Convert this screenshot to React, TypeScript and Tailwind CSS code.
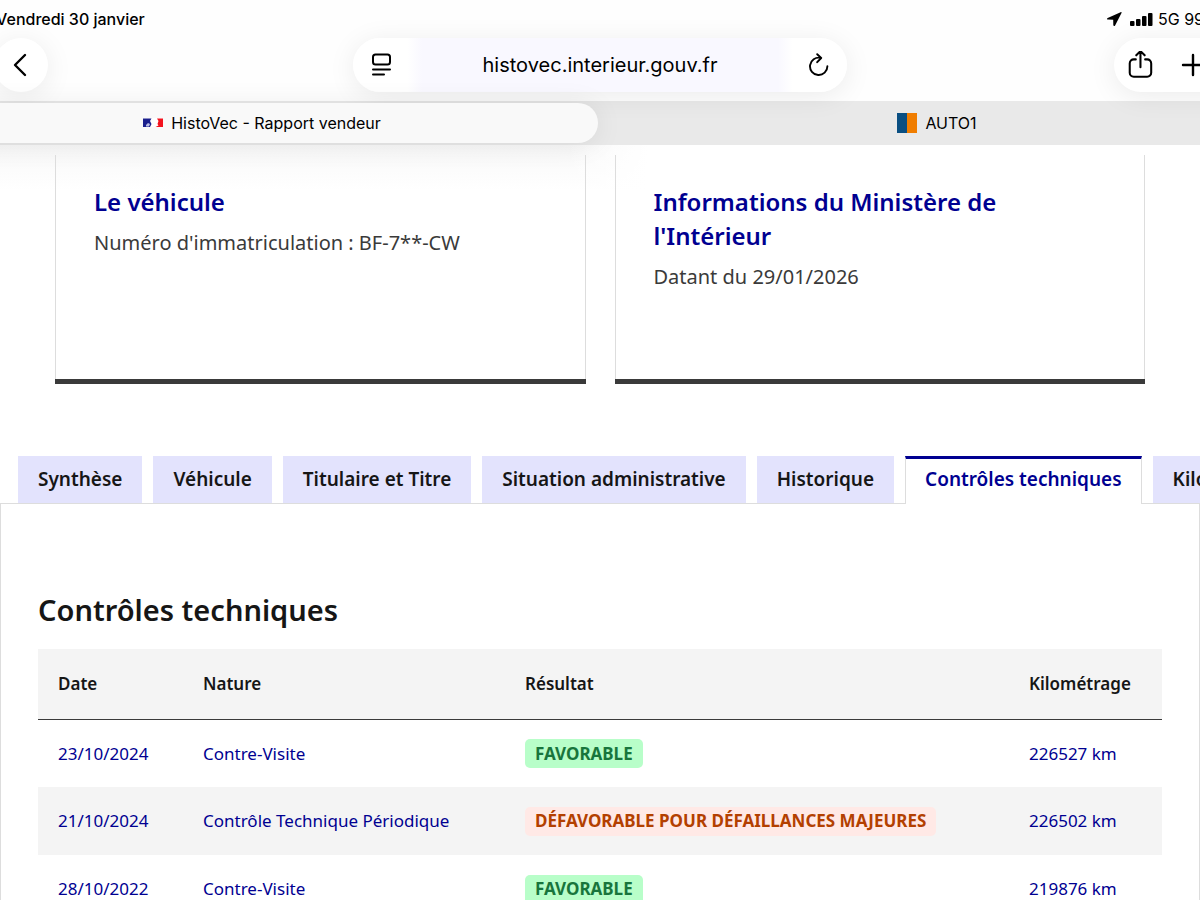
const resultStyles = {
  success: 'bg-[#b8fec9] text-[#18753c]',
  warning: 'bg-[#ffe9e6] text-[#b34000]',
};

const controls = [
  { date: '23/10/2024', nature: 'Contre-Visite', result: 'FAVORABLE', type: 'success', km: '226527 km' },
  { date: '21/10/2024', nature: 'Contrôle Technique Périodique', result: 'DÉFAVORABLE POUR DÉFAILLANCES MAJEURES', type: 'warning', km: '226502 km' },
  { date: '28/10/2022', nature: 'Contre-Visite', result: 'FAVORABLE', type: 'success', km: '219876 km' },
] as const;

const tabs = [
  'Synthèse',
  'Véhicule',
  'Titulaire et Titre',
  'Situation administrative',
  'Historique',
  'Contrôles techniques',
  'Kilométrage',
];

function StatusBar() {
  return (
    <div className="flex h-[38px] items-center justify-between text-base">
      <span className="ml-[70px] font-medium">Vendredi 30 janvier</span>
      <div className="mr-5 flex items-center gap-1">
        <svg className="mr-1 size-4" viewBox="0 0 16 16" fill="currentColor" aria-hidden="true">
          <path d="M14.6 1.2 1.7 6.9c-1.100.5-.8 1.700.3 1.700l5.200.1.100 5.400c0 1.100 1.300 1.400 1.800.3L15.500 2.100c.300-.7-.2-1.200-.9-.9Z" />
        </svg>
        <svg className="h-4 w-6" viewBox="0 0 24 16" fill="currentColor" aria-hidden="true">
          <rect x="0" y="10" width="4.500" height="5" rx="1" />
          <rect x="6" y="8" width="4.500" height="7" rx="1" />
          <rect x="12" y="5" width="4.500" height="10" rx="1" />
          <rect x="18" y="2" width="4.500" height="13" rx="1" />
        </svg>
        <span className="w-24">5G 99 %</span>
      </div>
    </div>
  );
}

function Toolbar() {
  return (
    <div className="grid grid-cols-[1fr_494px_1fr] items-center">
      <button aria-label="Retour" className="ml-[68px] flex size-[54px] items-center justify-center rounded-full bg-white shadow-[0_4px_28px_rgba(0,0,0,0.08)]">
        <svg className="size-6" viewBox="0 0 24 24" fill="none" stroke="currentColor" strokeWidth="2.4" strokeLinecap="round" strokeLinejoin="round">
          <path d="M16 2 6 12l10 10" />
        </svg>
      </button>

      <div className="flex h-[54px] items-center rounded-full bg-[linear-gradient(90deg,#fff_11%,#f9f8ff_14%,#f9f8ff_86%,#fff_89%)] px-4 shadow-[0_4px_28px_rgba(0,0,0,0.08)]">
        <button aria-label="Mode lecture">
          <svg className="size-6" viewBox="0 0 24 24" fill="none" stroke="currentColor" strokeWidth="2" strokeLinecap="round">
            <rect x="4" y="1.500" width="17" height="10" rx="2.500" />
            <path d="M4 16.500h17M4 21.500h11" />
          </svg>
        </button>
        <input
          aria-label="Adresse"
          readOnly
          value="histovec.interieur.gouv.fr"
          className="min-w-0 flex-1 bg-transparent text-center text-xl outline-none"
        />
        <button aria-label="Actualiser">
          <svg className="size-6" viewBox="0 0 24 24" fill="none" stroke="currentColor" strokeWidth="1.9" strokeLinecap="round" strokeLinejoin="round">
            <path d="M13.500 4.800A8.700 8.700 0 1 0 20.400 13.300M10.200 1.200l4 3.800-4 4.200" />
          </svg>
        </button>
      </div>

      <div className="flex h-[54px] w-40 items-center gap-6 justify-self-end rounded-full bg-white pl-3 shadow-[0_4px_28px_rgba(0,0,0,0.08)]">
        <button aria-label="Partager">
          <svg className="size-7" viewBox="0 0 28 30" fill="none" stroke="currentColor" strokeWidth="2.2" strokeLinecap="round" strokeLinejoin="round">
            <path d="M9.500 9H7.300A4.300 4.300 0 0 0 3 13.300v9.900a4.300 4.300 0 0 0 4.300 4.300h14.400a4.300 4.300 0 0 0 4.300-4.300v-9.900A4.300 4.300 0 0 0 21.700 9h-2.200M14.500 17.500V.100M10 4.600 14.500.100 19 4.600" />
          </svg>
        </button>
        <button aria-label="Nouvel onglet">
          <svg className="size-7" viewBox="0 0 28 28" fill="none" stroke="currentColor" strokeWidth="2.4" strokeLinecap="round">
            <path d="M15 4v20M5 14h20" />
          </svg>
        </button>
      </div>
    </div>
  );
}

function BrowserTabs() {
  return (
    <div className="mt-[9px] grid h-11 grid-cols-2 bg-[#e9e9e9] text-base">
      <button className="my-0.5 mr-0.5 flex items-center justify-center gap-2 rounded-full bg-[#f9f9f9] shadow-[0_2px_28px_rgba(0,0,0,0.08)]">
        <svg className="h-5 w-5" viewBox="0 0 20 20" aria-hidden="true">
          <rect y="5" width="20" height="9" fill="#fff" />
          <path d="M0 5.500h8.500L7 8l1.500 3-1.500 3H0Z" fill="#1a1f8c" />
          <path d="M20 5.500h-6L15.500 8l-1 3 1 1.500L12.500 14H20Z" fill="#f3131e" />
          <path d="m3 12 2-2 2 1-1 2.500H3Z" fill="#b9bde5" />
        </svg>
        <span>HistoVec - Rapport vendeur</span>
      </button>
      <button className="flex items-center justify-center gap-2">
        <svg className="h-5 w-5" viewBox="0 0 20 20" aria-hidden="true">
          <path d="M0 0h10v20H0Z" fill="#0a4f82" />
          <path d="M10 0h10v20H10Z" fill="#f07d00" />
        </svg>
        <span>AUTO1</span>
      </button>
    </div>
  );
}

function Card({ title, children }: { title: string; children: string }) {
  return (
    <article className="border-b-[5px] border-[#3a3a3a]">
      <div className="min-h-[224px] border-x border-[#ddd] px-[38px] pt-[30px]">
        <h3 className="text-2xl leading-[34px] font-semibold text-[#000091]">{title}</h3>
        <p className="mt-2 text-xl leading-8 text-[#3a3a3a]">{children}</p>
      </div>
    </article>
  );
}

export default function App() {
  return (
    <div className="h-screen overflow-hidden bg-white font-['Noto_Sans',sans-serif] text-[#161616]">
      <header className="-mx-[74px] bg-[#fefefe] font-[Inter,sans-serif] text-black">
        <StatusBar />
        <Toolbar />
        <BrowserTabs />
      </header>

      <main>
        <div className="bg-[linear-gradient(90deg,transparent_47%,#fff_54%),linear-gradient(#f8f8f8,#fff_45px)] pt-[10px]">
          <div className="mx-[55px] grid grid-cols-2 gap-[29px]">
            <Card title="Le véhicule">Numéro d'immatriculation : BF-7**-CW</Card>
            <Card title="Informations du Ministère de l'Intérieur">Datant du 29/01/2026</Card>
          </div>
        </div>

        <div role="tablist" className="mt-[72px] flex gap-[11px] pl-[18px] text-[19px] font-semibold whitespace-nowrap">
          {tabs.map((tab) => {
            const active = tab === 'Contrôles techniques';
            return (
              <button
                key={tab}
                role="tab"
                aria-selected={active}
                className={
                  active
                    ? 'relative z-10 -mb-px h-12 border-x border-t-[3px] border-x-[#ddd] border-t-[#000091] bg-white px-[19px] pb-1 text-[#000091]'
                    : 'h-[47px] bg-[#e3e3fd] px-5'
                }
              >
                {tab}
              </button>
            );
          })}
        </div>

        <section className="border border-[#ddd] px-[37px] pt-[84px]">
          <h2 className="text-[29px] leading-[44px] font-semibold">Contrôles techniques</h2>
          <table className="mt-[17px] w-full table-fixed text-left text-[17px]">
            <colgroup>
              <col className="w-[145px]" />
              <col className="w-[322px]" />
              <col />
              <col className="w-[153px]" />
            </colgroup>
            <thead className="border-b border-[#3a3a3a] bg-[#f4f4f4]">
              <tr className="h-[70px]">
                <th className="px-5 font-semibold">Date</th>
                <th className="px-5 font-semibold">Nature</th>
                <th className="px-5 font-semibold">Résultat</th>
                <th className="px-5 font-semibold">Kilométrage</th>
              </tr>
            </thead>
            <tbody className="text-[#000091]">
              {controls.map((row) => (
                <tr key={row.date} className="h-[68px] even:bg-[#f4f4f4]">
                  <td className="px-5">{row.date}</td>
                  <td className="px-5 whitespace-nowrap">{row.nature}</td>
                  <td className="px-5">
                    <span className={`inline-flex h-[29px] items-center rounded-[5px] px-[10px] font-bold whitespace-nowrap ${resultStyles[row.type]}`}>
                      {row.result}
                    </span>
                  </td>
                  <td className="px-5">{row.km}</td>
                </tr>
              ))}
            </tbody>
          </table>
        </section>
      </main>
    </div>
  );
}
